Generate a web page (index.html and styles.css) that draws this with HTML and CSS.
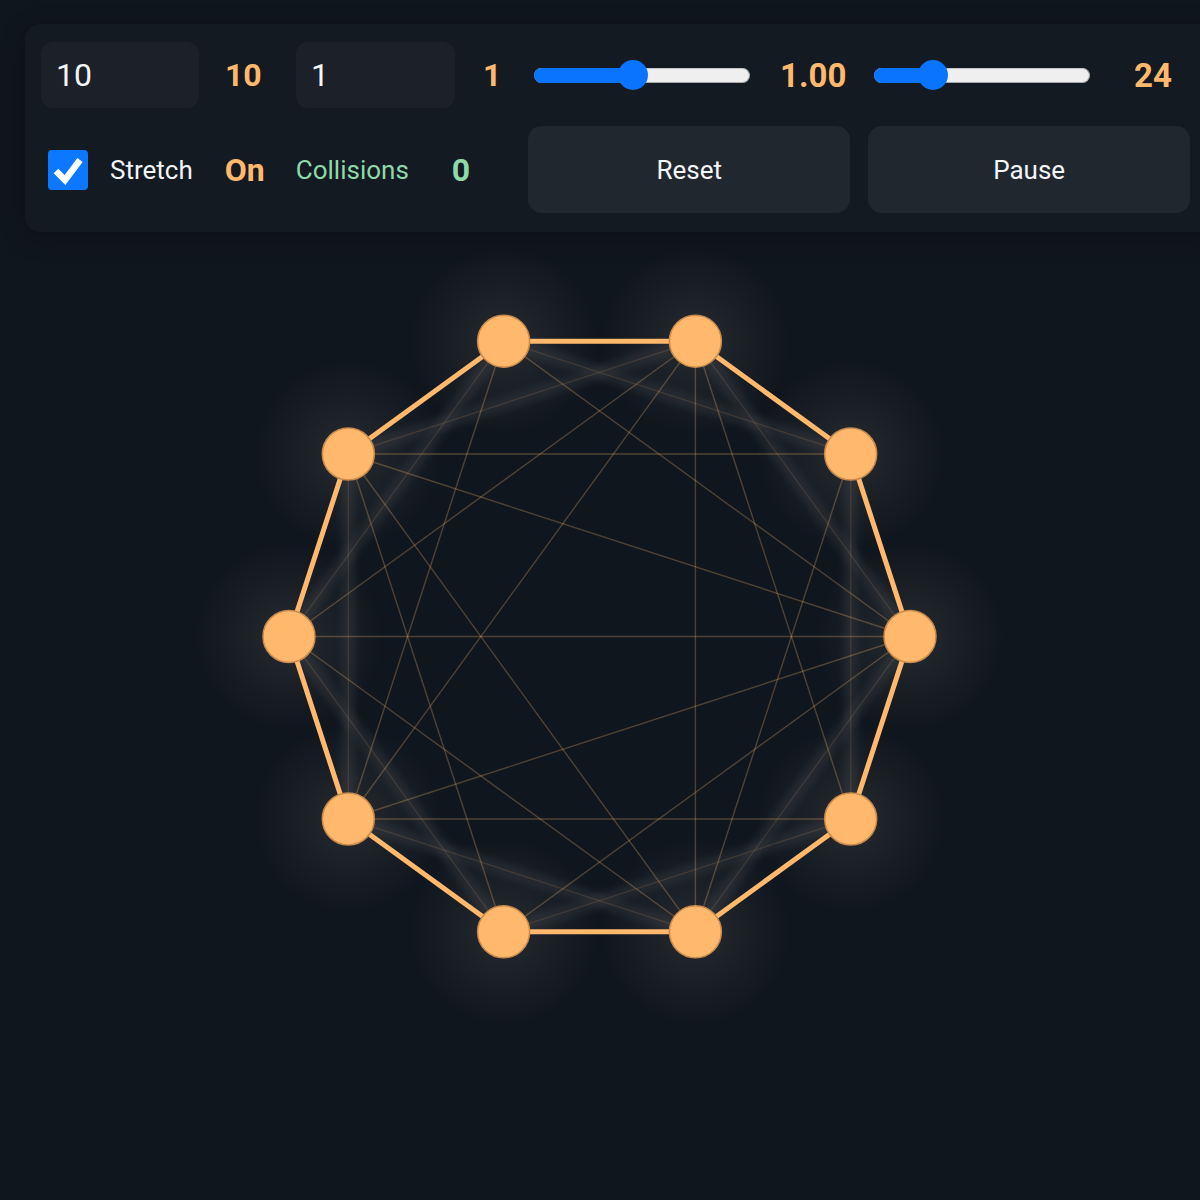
FILE: index.html
```html
<!DOCTYPE html>
<html lang="en">
<head>
<meta charset="utf-8">
<title>Graph</title>
<link rel="stylesheet" href="styles.css">
</head>
<body>
<div class="panel">
  <div class="row row-top">
    <input class="num" type="text" value="10">
    <span class="val val-nodes">10</span>
    <input class="num" type="text" value="1">
    <span class="val val-step">1</span>
    <div class="slider"><div class="fill" style="width:46%"></div><div class="thumb" style="left:46%"></div></div>
    <span class="val val-force">1.00</span>
    <div class="slider"><div class="fill" style="width:27%"></div><div class="thumb" style="left:27%"></div></div>
    <span class="val val-size">24</span>
  </div>
  <div class="row row-bottom">
    <label class="check">
      <span class="box"><svg viewBox="0 0 40 40" width="40" height="40"><path d="M8 21 L17 30 L32 10" fill="none" stroke="#fff" stroke-width="6.5"/></svg></span>
      <span class="check-label">Stretch</span>
    </label>
    <span class="val val-on">On</span>
    <span class="coll">Collisions</span>
    <span class="val val-coll">0</span>
    <button class="btn btn-reset">Reset</button>
    <button class="btn btn-pause">Pause</button>
  </div>
</div>

<svg class="graph" viewBox="0 232 1200 968" width="1200" height="968">
  <defs>
    <radialGradient id="glow">
      <stop offset="0" stop-color="#fff1dc" stop-opacity="0.10"/>
      <stop offset="0.45" stop-color="#fff1dc" stop-opacity="0.05"/>
      <stop offset="1" stop-color="#fff1dc" stop-opacity="0"/>
    </radialGradient>
    <filter id="blur" x="-20%" y="-20%" width="140%" height="140%">
      <feGaussianBlur stdDeviation="3"/>
    </filter>
  </defs>

  <g class="glows">
    <circle cx="910" cy="636.5" r="95" fill="url(#glow)"/>
    <circle cx="850.7" cy="454" r="95" fill="url(#glow)"/>
    <circle cx="695.4" cy="341.2" r="95" fill="url(#glow)"/>
    <circle cx="503.6" cy="341.2" r="95" fill="url(#glow)"/>
    <circle cx="348.3" cy="454" r="95" fill="url(#glow)"/>
    <circle cx="289" cy="636.5" r="95" fill="url(#glow)"/>
    <circle cx="348.3" cy="819" r="95" fill="url(#glow)"/>
    <circle cx="503.6" cy="931.8" r="95" fill="url(#glow)"/>
    <circle cx="695.4" cy="931.8" r="95" fill="url(#glow)"/>
    <circle cx="850.7" cy="819" r="95" fill="url(#glow)"/>
  </g>

  <g class="bands" filter="url(#blur)">
    <line x1="910" y1="636.5" x2="695.4" y2="341.2"/>
    <line x1="850.7" y1="454" x2="503.6" y2="341.2"/>
    <line x1="695.4" y1="341.2" x2="348.3" y2="454"/>
    <line x1="503.6" y1="341.2" x2="289" y2="636.5"/>
    <line x1="348.3" y1="454" x2="348.3" y2="819"/>
    <line x1="289" y1="636.5" x2="503.6" y2="931.8"/>
    <line x1="348.3" y1="819" x2="695.4" y2="931.8"/>
    <line x1="503.6" y1="931.8" x2="850.7" y2="819"/>
    <line x1="695.4" y1="931.8" x2="910" y2="636.5"/>
    <line x1="850.7" y1="819" x2="850.7" y2="454"/>
  </g>

  <g class="band-lines">
    <line x1="910" y1="636.5" x2="695.4" y2="341.2"/>
    <line x1="850.7" y1="454" x2="503.6" y2="341.2"/>
    <line x1="695.4" y1="341.2" x2="348.3" y2="454"/>
    <line x1="503.6" y1="341.2" x2="289" y2="636.5"/>
    <line x1="348.3" y1="454" x2="348.3" y2="819"/>
    <line x1="289" y1="636.5" x2="503.6" y2="931.8"/>
    <line x1="348.3" y1="819" x2="695.4" y2="931.8"/>
    <line x1="503.6" y1="931.8" x2="850.7" y2="819"/>
    <line x1="695.4" y1="931.8" x2="910" y2="636.5"/>
    <line x1="850.7" y1="819" x2="850.7" y2="454"/>
  </g>

  <g class="chords">
    <line x1="910" y1="636.5" x2="503.6" y2="341.2"/>
    <line x1="910" y1="636.5" x2="348.3" y2="454"/>
    <line x1="910" y1="636.5" x2="289" y2="636.5"/>
    <line x1="910" y1="636.5" x2="348.3" y2="819"/>
    <line x1="910" y1="636.5" x2="503.6" y2="931.8"/>
    <line x1="850.7" y1="454" x2="348.3" y2="454"/>
    <line x1="850.7" y1="454" x2="695.4" y2="931.8"/>
    <line x1="695.4" y1="341.2" x2="289" y2="636.5"/>
    <line x1="695.4" y1="341.2" x2="348.3" y2="819"/>
    <line x1="695.4" y1="341.2" x2="695.4" y2="931.8"/>
    <line x1="695.4" y1="341.2" x2="850.7" y2="819"/>
    <line x1="503.6" y1="341.2" x2="348.3" y2="819"/>
    <line x1="348.3" y1="454" x2="503.6" y2="931.8"/>
    <line x1="348.3" y1="454" x2="695.4" y2="931.8"/>
    <line x1="289" y1="636.5" x2="695.4" y2="931.8"/>
    <line x1="348.3" y1="819" x2="850.7" y2="819"/>
  </g>

  <polygon class="ring" points="910,636.5 850.7,454 695.4,341.2 503.6,341.2 348.3,454 289,636.5 348.3,819 503.6,931.8 695.4,931.8 850.7,819"/>

  <g class="nodes">
    <circle cx="910" cy="636.5" r="26"/>
    <circle cx="850.7" cy="454" r="26"/>
    <circle cx="695.4" cy="341.2" r="26"/>
    <circle cx="503.6" cy="341.2" r="26"/>
    <circle cx="348.3" cy="454" r="26"/>
    <circle cx="289" cy="636.5" r="26"/>
    <circle cx="348.3" cy="819" r="26"/>
    <circle cx="503.6" cy="931.8" r="26"/>
    <circle cx="695.4" cy="931.8" r="26"/>
    <circle cx="850.7" cy="819" r="26"/>
  </g>
</svg>
</body>
</html>
```
FILE: styles.css
```css
html, body {
  margin: 0;
  padding: 0;
  overflow: hidden;
  background: #10161e;
}

body {
  font-family: Roboto, "Liberation Sans", sans-serif;
  color: #f1f3f5;
  width: 1200px;
  height: 1200px;
}

.panel {
  margin: 24px 0 0 25px;
  width: 1166px;
  padding: 18px 16px 19px 16px;
  background: #141a22;
  border-radius: 16px;
  box-shadow: 0 6px 24px rgba(0, 0, 0, 0.25);
  display: flex;
  flex-direction: column;
  gap: 18px;
}

.row {
  display: flex;
  align-items: center;
}

.row-top {
  gap: 28px;
  height: 66px;
}

.num {
  box-sizing: border-box;
  height: 66px;
  width: 158px;
  padding: 0 0 0 15px;
  border: none;
  outline: none;
  border-radius: 12px;
  background: #1c2129;
  color: #f4f5f7;
  font-family: Roboto, "Liberation Sans", sans-serif;
  font-size: 32px;
}

.num + .val + .num {
  width: 159px;
}

.val {
  font-weight: 700;
  font-size: 32px;
  color: #ffb86c;
  line-height: 1;
}

.val-nodes { width: 41px; margin-left: -2px; margin-right: 2px; }
.val-step { width: 23px; }
.val-force { width: 66px; padding-left: 2px; font-size: 33px; }
.val-size { padding-left: 16px; font-size: 33px; }

.slider {
  position: relative;
  box-sizing: border-box;
  width: 216px;
  height: 15px;
  border-radius: 8px;
  background: #efefef;
  border: 1px solid #a9a9a9;
  border-top-color: #c4c4c4;
}

.fill {
  position: absolute;
  left: -1px;
  top: -1px;
  bottom: -1px;
  background: #0b74ff;
  border-radius: 8px 0 0 8px;
}

.thumb {
  position: absolute;
  top: 50%;
  width: 30px;
  height: 30px;
  margin: -15px 0 0 -15px;
  border-radius: 50%;
  background: #0b74ff;
}

.row-bottom {
  height: 87px;
}

.check {
  display: flex;
  align-items: center;
  margin-left: 7px;
  gap: 22px;
}

.box {
  width: 40px;
  height: 40px;
  border-radius: 4px;
  background: #0b78ff;
  display: flex;
}

.check-label,
.coll {
  font-size: 26px;
}

.check-label {
  color: #f3f4f6;
}

.val-on {
  margin-left: 32px;
}

.coll {
  margin-left: 31px;
  color: #8fd9a8;
}

.val-coll {
  margin-left: 43px;
  color: #8fd9a8;
}

.btn {
  width: 322px;
  height: 87px;
  border: none;
  border-radius: 14px;
  background: #21272f;
  color: #f4f5f7;
  font-family: Roboto, "Liberation Sans", sans-serif;
  font-size: 26px;
  padding: 0;
}

.btn-reset {
  margin-left: 58px;
}

.btn-pause {
  margin-left: 18px;
}

.graph {
  display: block;
}

.bands line {
  stroke: #fff0dc;
  stroke-opacity: 0.06;
  stroke-width: 14;
}

.band-lines line {
  stroke: #ffb86c;
  stroke-opacity: 0.12;
  stroke-width: 1.4;
}

.chords line {
  stroke: #ffb86c;
  stroke-opacity: 0.27;
  stroke-width: 1.4;
}

.ring {
  fill: none;
  stroke: #ffb86c;
  stroke-width: 5;
  stroke-linejoin: round;
}

.nodes circle {
  fill: #ffb86c;
  stroke: #c98a4c;
  stroke-width: 1.5;
}
```
